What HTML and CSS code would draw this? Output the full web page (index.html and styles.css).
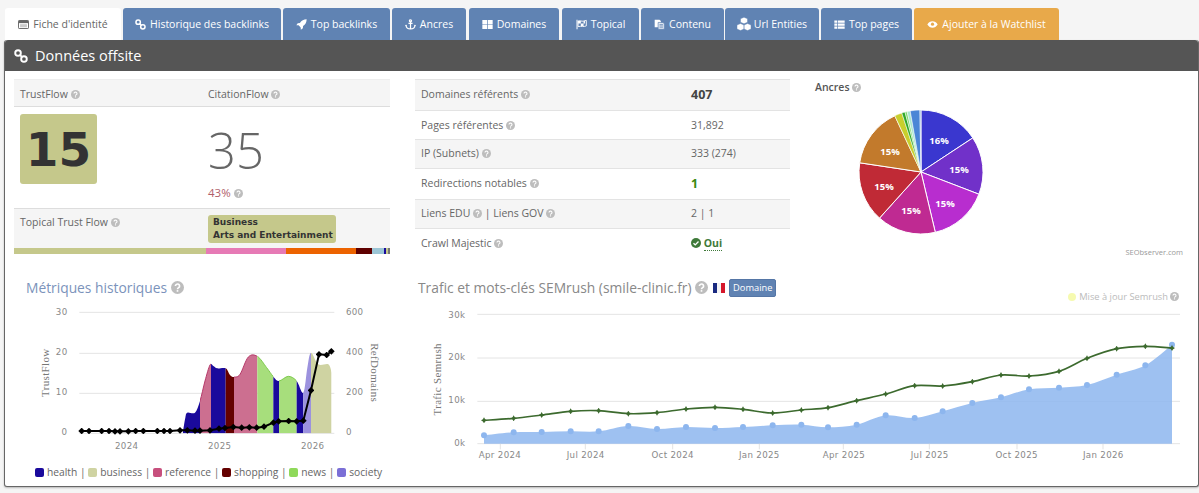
FILE: index.html
```html
<!DOCTYPE html>
<html lang="fr">
<head>
<meta charset="utf-8">
<title>Données offsite</title>
<link rel="stylesheet" href="styles.css">
</head>
<body>
<svg class="defs" width="0" height="0" aria-hidden="true">
  <symbol id="i-q" viewBox="0 0 16 16"><circle cx="8" cy="8" r="8" fill="#bdbdbd"/><path d="M5.4 6.2a2.6 2.4 0 1 1 4 2c-.9.6-1.4 1-1.4 2" fill="none" stroke="#fff" stroke-width="2"/><rect x="7" y="11.2" width="2" height="2" fill="#fff"/></symbol>
  <symbol id="i-card" viewBox="0 0 16 16"><rect x=".7" y="2.2" width="14.6" height="11.6" rx="1" fill="none" stroke="currentColor" stroke-width="1.4"/><rect x="1" y="2.5" width="14" height="3.5" fill="currentColor"/><rect x="3" y="7.5" width="10" height="4.5" fill="currentColor" opacity=".35"/></symbol>
  <symbol id="i-link" viewBox="0 0 16 16"><g fill="none" stroke="currentColor" stroke-width="2.200"><circle cx="4.600" cy="4.600" r="3.200"/><circle cx="11.400" cy="11.400" r="3.200"/><path d="M6.500 6.500l3 3"/></g></symbol>
  <symbol id="i-rocket" viewBox="0 0 16 16"><path d="M15.500.5c-4.300 0-7.500 1.800-9.800 5.200L2.500 6 .5 9l3.300.2 3 3 .2 3.300 3-2 .3-3.200c3.400-2.300 5.200-5.500 5.200-9.800z" fill="currentColor"/></symbol>
  <symbol id="i-anchor" viewBox="0 0 16 16"><g fill="none" stroke="currentColor" stroke-width="1.800"><circle cx="8" cy="2.600" r="1.500"/><path d="M8 4v10.500M5 6.500h6M1.500 9.500c.3 3.200 3 5 6.500 5s6.200-1.800 6.500-5"/></g><path d="M0 10l1.500-2L3 10zM13 10l1.500-2 1.500 2z" fill="currentColor"/></symbol>
  <symbol id="i-grid" viewBox="0 0 16 16"><path d="M.5 1.500h7v6h-7zM8.500 1.500h7v6h-7zM.5 8.500h7v6h-7zM8.500 8.500h7v6h-7z" fill="currentColor"/></symbol>
  <symbol id="i-flag" viewBox="0 0 16 16"><path d="M1.500 1v14" stroke="currentColor" stroke-width="1.500"/><path d="M3 3c3-1.500 5 1 8 0l4-1v8c-4 2-7 0-12 1z" fill="none" stroke="currentColor" stroke-width="1.300"/><path d="M3 3h4v3.500h4V3h2v3.500h-2v3.500H7V6.500H3z" fill="currentColor"/></symbol>
  <symbol id="i-copy" viewBox="0 0 16 16"><path d="M1 1h7l2 2v9H1z" fill="currentColor"/><path d="M6 5h7l2 2v8H6z" fill="#dfe7f2" stroke="#6083b3"/><path d="M8 8h5M8 10h5M8 12h5" stroke="#6083b3"/></symbol>
  <symbol id="i-cubes" viewBox="0 0 16 16"><path d="M8 .3l4 1.600v4.200L8 7.700 4 6.100V1.900zM4 7.500L8 9.100v4.700L4 15.500 0 13.800V9.100zM12 7.500L16 9.100v4.700L12 15.500 8 13.800V9.100z" fill="currentColor" stroke="#6083b3" stroke-width=".5"/></symbol>
  <symbol id="i-rows" viewBox="0 0 16 16"><path d="M.5 2h4v3.300h-4zM5.500 2h10v3.300h-10zM.5 6.400h4v3.300h-4zM5.500 6.400h10v3.300h-10zM.5 10.800h4v3.300h-4zM5.500 10.800h10v3.300h-10z" fill="currentColor"/></symbol>
  <symbol id="i-eye" viewBox="0 0 16 16"><path d="M.5 8C2.300 5 5 3.300 8 3.300S13.700 5 15.500 8c-1.800 3-4.500 4.700-7.500 4.700S2.300 11 .5 8z" fill="currentColor"/><circle cx="8" cy="7.500" r="2.300" fill="#e8a94a"/></symbol>
  <symbol id="i-check" viewBox="0 0 16 16"><circle cx="8" cy="8" r="8" fill="#3f7a3a"/><path d="M4 8.300l2.800 2.700L12 5.600" fill="none" stroke="#fff" stroke-width="2.200"/></symbol>
</svg>

<nav class="tabs">
  <a class="tab tab-active"><svg class="ico"><use href="#i-card"/></svg>Fiche d'identité</a>
  <a class="tab tab-w158"><svg class="ico"><use href="#i-link"/></svg>Historique des backlinks</a>
  <a class="tab tab-w107"><svg class="ico"><use href="#i-rocket"/></svg>Top backlinks</a>
  <a class="tab tab-w74"><svg class="ico"><use href="#i-anchor"/></svg>Ancres</a>
  <a class="tab tab-w90"><svg class="ico"><use href="#i-grid"/></svg>Domaines</a>
  <a class="tab tab-w77"><svg class="ico"><use href="#i-flag"/></svg>Topical</a>
  <a class="tab tab-w83"><svg class="ico"><use href="#i-copy"/></svg>Contenu</a>
  <a class="tab tab-w94"><svg class="ico ico-wide"><use href="#i-cubes"/></svg>Url Entities</a>
  <a class="tab tab-w91"><svg class="ico"><use href="#i-rows"/></svg>Top pages</a>
  <a class="tab tab-watch"><svg class="ico"><use href="#i-eye"/></svg>Ajouter à la Watchlist</a>
</nav>

<main class="panel">
  <header class="panel-head"><svg class="ico-head"><use href="#i-link"/></svg>Données offsite</header>

  <section class="top-row">
    <div class="flow">
      <div class="flow-head">
        <div>TrustFlow <svg class="q"><use href="#i-q"/></svg></div>
        <div>CitationFlow <svg class="q"><use href="#i-q"/></svg></div>
      </div>
      <div class="flow-body">
        <div class="cell-badge"><div class="tf-badge">15</div></div>
        <div class="cell-cf">
          <div class="cf-num">35</div>
          <div class="cf-pct">43% <svg class="q"><use href="#i-q"/></svg></div>
        </div>
      </div>
      <div class="flow-topical">
        <div>Topical Trust Flow <svg class="q"><use href="#i-q"/></svg></div>
        <div class="cell-topics"><div class="topics">Business<br>Arts and Entertainment</div></div>
      </div>
      <div class="topic-bar">
        <i class="s1"></i><i class="s2"></i><i class="s3"></i><i class="s4"></i><i class="s5"></i><i class="s6"></i><i class="s7"></i><i class="s8"></i>
      </div>
    </div>

    <div class="stats">
      <div class="stat stat-a"><span>Domaines référents <svg class="q"><use href="#i-q"/></svg></span><b class="big">407</b></div>
      <div class="stat stat-b"><span>Pages référentes <svg class="q"><use href="#i-q"/></svg></span><span>31,892</span></div>
      <div class="stat stat-c"><span>IP (Subnets) <svg class="q"><use href="#i-q"/></svg></span><span>333 (274)</span></div>
      <div class="stat stat-d"><span>Redirections notables <svg class="q"><use href="#i-q"/></svg></span><b class="green-num">1</b></div>
      <div class="stat stat-e"><span>Liens EDU <svg class="q"><use href="#i-q"/></svg> | Liens GOV <svg class="q"><use href="#i-q"/></svg></span><span>2 | 1</span></div>
      <div class="stat stat-f"><span>Crawl Majestic <svg class="q"><use href="#i-q"/></svg></span><span class="oui"><svg class="q q-check"><use href="#i-check"/></svg> <b>Oui</b></span></div>
    </div>

    <div class="anchors">
      <div class="anchors-title">Ancres <svg class="q"><use href="#i-q"/></svg></div>
      <svg class="pie" viewBox="790 90 409 160" width="409" height="160">
        <g transform="translate(921 172)" stroke="#fff" stroke-width="1">
          <path fill="#3a37cf" d="M0 0V-62A62 62 0 0 1 51.800-34.100Z"/>
          <path fill="#7131c9" d="M0 0L51.800-34.100A62 62 0 0 1 57.900 22.200Z"/>
          <path fill="#b82dcf" d="M0 0L57.900 22.200A62 62 0 0 1 14.300 60.300Z"/>
          <path fill="#bf2a92" d="M0 0L14.300 60.300A62 62 0 0 1-41.500 46.100Z"/>
          <path fill="#c02a36" d="M0 0L-41.500 46.100A62 62 0 0 1-61.300-9.200Z"/>
          <path fill="#c27a2c" d="M0 0L-61.300-9.200A62 62 0 0 1-26.200-56.200Z"/>
          <path fill="#c8cf2d" stroke-width=".5" d="M0 0L-26.200-56.200A62 62 0 0 1-19.200-59Z"/>
          <path fill="#2fa82a" stroke-width=".5" d="M0 0L-19.200-59A62 62 0 0 1-16-59.900Z"/>
          <path fill="#7ed86c" stroke-width=".5" d="M0 0L-16-59.900A62 62 0 0 1-13.900-60.400Z"/>
          <path fill="#a8e6cf" stroke-width=".5" d="M0 0L-13.900-60.400A62 62 0 0 1-10.800-61.100Z"/>
          <path fill="#4a86d6" stroke-width=".5" d="M0 0L-10.800-61.100A62 62 0 0 1-1.100-62Z"/>
          <path fill="#9db9e0" stroke-width=".5" d="M0 0L-1.100-62A62 62 0 0 1 0-62Z"/>
        </g>
        <g class="pie-labels">
          <text x="939" y="144">16%</text>
          <text x="959" y="173">15%</text>
          <text x="945" y="207">15%</text>
          <text x="911" y="214">15%</text>
          <text x="884" y="190">15%</text>
          <text x="890" y="155">15%</text>
        </g>
      </svg>
      <div class="credit">SEObserver.com</div>
    </div>
  </section>

  <section class="bottom-row">
    <div class="hist">
      <h2 class="title-blue">Métriques historiques <svg class="q-lg"><use href="#i-q"/></svg></h2>
      <svg class="hist-chart" viewBox="42 90 1158 450" width="386" height="150">
        <defs>
          <clipPath id="hist-area"><path class="js-area"/></clipPath>
          <clipPath id="top-ref"><rect x="600" y="200" width="33" height="300"/><rect x="702" y="200" width="70" height="300"/></clipPath>
          <clipPath id="top-news"><rect x="772" y="200" width="48" height="300"/><rect x="837" y="200" width="53" height="300"/></clipPath>
          <marker id="dia-k" viewBox="-8 -8 16 16" markerUnits="userSpaceOnUse" markerWidth="20" markerHeight="20"><path d="M0-8L8 0 0 8-8 0Z" fill="#000"/></marker>
        </defs>
        <g class="grid"><path d="M238 124H1003M238 247H1003M238 367H1003M238 487H1003"/></g>
        <g clip-path="url(#hist-area)">
          <rect x="548" y="200" width="52" height="300" fill="#1a0a9c"/>
          <rect x="600" y="200" width="33" height="300" fill="#cc6f90"/>
          <rect x="633" y="200" width="44" height="300" fill="#1a0a9c"/>
          <rect x="677" y="200" width="25" height="300" fill="#640000"/>
          <rect x="702" y="200" width="70" height="300" fill="#cc6f90"/>
          <rect x="772" y="200" width="48" height="300" fill="#a7de7c"/>
          <rect x="820" y="200" width="17" height="300" fill="#1a0a9c"/>
          <rect x="837" y="200" width="53" height="300" fill="#a7de7c"/>
          <rect x="890" y="200" width="20" height="300" fill="#1a0a9c"/>
          <rect x="910" y="200" width="23" height="300" fill="#9c92de"/>
          <rect x="933" y="200" width="62" height="300" fill="#cfd3a2"/>
        </g>
        <path class="js-top top-line top-ref" clip-path="url(#top-ref)"/>
        <path class="js-top top-line top-news" clip-path="url(#top-news)"/>
        <polyline class="black-line" points="245,480 267,480 305,480 327,480 345,481 360,481 385,481 407,480 430,480 472,480 492,480 510,480 540,478 562,478 585,479 600,479 630,478 657,473 675,471 700,468 725,470 748,469 770,470 792,467 820,455 836,451 866,450 890,451 910,449 933,358 957,250 980,252 994,241"/>
        <g class="tick">
          <text x="185" y="133" text-anchor="middle">30</text>
          <text x="185" y="253" text-anchor="middle">20</text>
          <text x="185" y="373" text-anchor="middle">10</text>
          <text x="193" y="493" text-anchor="middle">0</text>
          <text x="1064" y="132" text-anchor="middle">600</text>
          <text x="1064" y="253" text-anchor="middle">400</text>
          <text x="1064" y="373" text-anchor="middle">200</text>
          <text x="1047" y="493" text-anchor="middle">0</text>
          <text x="380" y="533" text-anchor="middle">2024</text>
          <text x="659" y="533" text-anchor="middle">2025</text>
          <text x="938" y="533" text-anchor="middle">2026</text>
        </g>
        <text class="axis-title" transform="translate(146 305) rotate(-90)" text-anchor="middle">TrustFlow</text>
        <text class="axis-title" transform="translate(1112 305) rotate(90)" text-anchor="middle">RefDomains</text>
      </svg>
      <div class="legend">
        <i class="lg l-health"></i>health | <i class="lg l-business"></i>business | <i class="lg l-reference"></i>reference | <i class="lg l-shopping"></i>shopping | <i class="lg l-news"></i>news | <i class="lg l-society"></i>society
      </div>
    </div>

    <div class="sem">
      <div class="sem-head">
        <h2 class="title-gray">Trafic et mots-clés SEMrush (smile-clinic.fr) <svg class="q-lg"><use href="#i-q"/></svg></h2>
        <svg class="flag" viewBox="0 0 12 10" width="12" height="10"><rect width="4" height="10" fill="#1a2a80"/><rect x="4" width="4" height="10" fill="#f4f4f4"/><rect x="8" width="4" height="10" fill="#d5172b"/></svg>
        <span class="chip">Domaine</span>
        <span class="update"><i class="dot"></i>Mise à jour Semrush <svg class="q"><use href="#i-q"/></svg></span>
      </div>
      <svg class="sem-chart" viewBox="0 90 2385 510" width="795" height="170">
        <defs>
          <marker id="dot-b" viewBox="-10 -10 20 20" markerUnits="userSpaceOnUse" markerWidth="20" markerHeight="20"><circle r="9" fill="#8db6ee"/></marker>
          <marker id="dia-g" viewBox="-8 -8 16 16" markerUnits="userSpaceOnUse" markerWidth="18" markerHeight="18"><path d="M0-8L3-3 8 0 3 3 0 8-3 3-8 0-3-3Z" fill="#3c6a2e"/></marker>
        </defs>
        <g class="grid"><path d="M232 130H2340M232 261H2340M232 391H2340M232 518H2340"/></g>
        <path class="js-blue-area blue-area"/>
        <path class="js-blue blue-line"/>
        <path class="js-green green-line"/>
        <g class="x-ticks"><path d="M301 518v17M556 518v17M818 518v17M1078 518v17M1330 518v17M1588 518v17M1851 518v17M2109 518v17"/></g>
        <g class="tick">
          <text x="196" y="140" text-anchor="end">30k</text>
          <text x="196" y="268" text-anchor="end">20k</text>
          <text x="196" y="396" text-anchor="end">10k</text>
          <text x="196" y="524" text-anchor="end">0k</text>
          <text x="300" y="562" text-anchor="middle">Apr 2024</text>
          <text x="557" y="562" text-anchor="middle">Jul 2024</text>
          <text x="818" y="562" text-anchor="middle">Oct 2024</text>
          <text x="1078" y="562" text-anchor="middle">Jan 2025</text>
          <text x="1332" y="562" text-anchor="middle">Apr 2025</text>
          <text x="1589" y="562" text-anchor="middle">Jul 2025</text>
          <text x="1850" y="562" text-anchor="middle">Oct 2025</text>
          <text x="2110" y="562" text-anchor="middle">Jan 2026</text>
        </g>
        <text class="axis-title" transform="translate(124 325) rotate(-90)" text-anchor="middle">Trafic Semrush</text>
      </svg>
    </div>
  </section>
</main>
<script src="chart.js"></script>
</body>
</html>
```

FILE: styles.css
```css
* { box-sizing: border-box; }
html, body { margin: 0; padding: 0; }
body {
  width: 1199px;
  height: 493px;
  overflow: hidden;
  background: #f5f5f5;
  font-family: "Open Sans", "Liberation Sans", sans-serif;
  font-size: 10.5px;
  color: #666;
}
.defs { position: absolute; }

.tabs { display: flex; gap: 2px; padding: 8px 0 0 5px; height: 40px; }
.tab {
  display: flex; align-items: center; justify-content: center;
  height: 32px; border-radius: 3px 3px 0 0;
  background: #6083b3; color: #fff; white-space: nowrap; font-size: 10.5px;
}
.tab-active { width: 116px; background: #fff; color: #666; }
.tab-w158 { width: 158px; }
.tab-w107 { width: 107px; }
.tab-w74 { width: 74px; }
.tab-w90 { width: 90px; margin-left: 1px; }
.tab-w77 { width: 77px; margin-left: 1px; }
.tab-w83 { width: 83px; }
.tab-w94 { width: 94px; margin-left: -1px; }
.tab-w91 { width: 91px; }
.tab-watch { width: 145px; background: #e8a94a; }
.ico { width: 11px; height: 11px; margin-right: 4px; flex: none; }
.ico-wide { width: 14px; height: 14px; margin-right: 3px; }

.panel {
  margin-left: 4px; width: 1195px; height: 447px;
  background: #fff; border: 1px solid #666; border-top: 0;
  border-radius: 3px; box-shadow: 0 1px 2px rgba(0,0,0,.25);
}
.panel-head {
  display: flex; align-items: center;
  height: 31px; background: #555; color: #fff;
  font-size: 14.500px; padding-left: 9px; border-radius: 3px 3px 0 0;
}
.ico-head { width: 14px; height: 14px; margin-right: 7px; color: #fff; }

.q { width: 9px; height: 9px; vertical-align: -1px; }
.q-lg { width: 13px; height: 13px; vertical-align: -1px; }

.top-row { display: flex; padding: 8px 0 0 9px; height: 200px; }

.flow { width: 376px; margin-right: 25px; flex: none; }
.flow-head, .flow-body, .flow-topical { display: grid; grid-template-columns: 188px 188px; }
.flow-head {
  height: 28px; background: #f5f5f5; border-top: 1px solid #eee; border-bottom: 1px solid #ddd;
  align-items: center; padding: 2px 0 0 6px;
}
.flow-body { height: 101px; }
.cell-badge { padding: 7px 0 0 6px; }
.tf-badge {
  width: 77px; height: 70px; border-radius: 3px; background: #c5c88b; color: #333;
  font-family: "DejaVu Sans", sans-serif; font-weight: 700; font-size: 47px;
  display: flex; align-items: center; justify-content: center;
}
.cell-cf { padding-left: 6px; }
.cf-num { font-size: 49px; font-weight: 300; color: #666; line-height: 68px; margin-top: 9px; }
.cf-pct { color: #b0606a; font-size: 11.500px; margin-top: 1px; }
.flow-topical {
  height: 40px; background: #f5f5f5; border-top: 1px solid #ddd; padding: 6px 0 0 6px;
}
.topics {
  width: 128px; height: 28px; border-radius: 3px; background: #c5c88b; color: #333;
  font-family: "DejaVu Sans", sans-serif; font-weight: 700; font-size: 9px; line-height: 13px;
  padding: 1px 0 0 5px; white-space: nowrap;
}
.topic-bar { display: flex; height: 6px; }
.topic-bar i { display: block; height: 6px; }
.s1 { width: 192px; background: #c5c88b; }
.s2 { width: 80px; background: #e67ab5; }
.s3 { width: 70px; background: #ec6300; }
.s4 { width: 16px; background: #5f0000; }
.s5 { width: 12px; background: #9cc5d5; }
.s6 { width: 2px; background: #1a0a9c; }
.s7 { width: 2px; background: #c5c88b; }
.s8 { width: 2px; background: #777; }

.stats { width: 375px; flex: none; }
.stat {
  display: grid; grid-template-columns: 270px 1fr; align-items: center;
  padding: 0 0 2px 6px; border-top: 1px solid #e3e3e3;
}
.stat-a { height: 31px; background: #f5f5f5; }
.stat-b { height: 29px; padding-bottom: 0; }
.stat-c { height: 29px; background: #f5f5f5; }
.stat-d { height: 31px; }
.stat-e { height: 29px; background: #f5f5f5; }
.stat-f { height: 30px; }
.big { font-size: 12.500px; color: #444; }
.green-num { font-size: 12.500px; color: #3a8a12; }
.oui { color: #3f7a3a; }
.oui b { border-bottom: 1px dotted #3f7a3a; }
.q-check { width: 10px; height: 10px; }

.anchors { flex: 1; position: relative; }
.anchors-title { padding: 1px 0 0 25px; font-weight: 600; color: #555; }
.pie { position: absolute; left: 0; top: 11px; }
.pie-labels text { fill: #fff; font-size: 9.500px; font-weight: 700; text-anchor: middle; font-family: "Open Sans", sans-serif; }
.credit { position: absolute; right: 15px; top: 168px; font-size: 7.500px; color: #999; }

.bottom-row { display: flex; padding-left: 9px; }
.hist { width: 386px; flex: none; }
.sem { width: 795px; flex: none; }
h2 { margin: 0; font-weight: 400; font-size: 13.800px; line-height: 20px; }
.title-blue { padding: 7px 0 0 12px; color: #7b93bb; height: 30px; }
.hist-chart, .sem-chart { display: block; }
.title-gray { color: #888; }
.sem-head { display: flex; align-items: center; height: 30px; padding: 4px 0 0 18px; position: relative; }
.flag { margin-left: 5px; }
.chip {
  margin-left: 4px; padding: 1px 3px; border-radius: 2px; background: #6083b3; border: 1px solid #5576a6;
  color: #fff; font-size: 9.300px; line-height: 14px;
}
.update { position: absolute; right: 16px; top: 19px; color: #bbb; font-size: 9.300px; display: flex; align-items: center; gap: 2px; }
.dot { width: 8px; height: 8px; border-radius: 50%; background: #f6fab0; margin-right: 1px; }

.grid path { stroke: #e4e4e4; stroke-width: 3; fill: none; }
.x-ticks path { stroke: #d5d5d5; stroke-width: 2; fill: none; }
.tick text { font-family: "DejaVu Sans", sans-serif; font-size: 26px; fill: #888; letter-spacing: 1px; }
.axis-title { font-family: "Liberation Serif", serif; font-size: 33px; fill: #777; letter-spacing: 1px; }
.top-line { fill: none; stroke-width: 3; }
.top-ref { stroke: #b53a6a; }
.top-news { stroke: #7dc94e; }
.black-line { fill: none; stroke: #000; stroke-width: 6; marker-start: url(#dia-k); marker-mid: url(#dia-k); marker-end: url(#dia-k); }
.blue-area { fill: #8db6ee; fill-opacity: .85; }
.blue-line { fill: none; stroke: none; marker-start: url(#dot-b); marker-mid: url(#dot-b); marker-end: url(#dot-b); }
.green-line { fill: none; stroke: #3c6a2e; stroke-width: 5; marker-start: url(#dia-g); marker-mid: url(#dia-g); marker-end: url(#dia-g); }

.legend { padding: 14px 0 0 21px; white-space: nowrap; color: #666; font-size: 10.250px; line-height: 14px; }
.lg { display: inline-block; width: 9px; height: 9px; border-radius: 2px; margin-right: 3px; vertical-align: -1px; }
.l-health { background: #1a0a9c; }
.l-business { background: #cfd3a2; }
.l-reference { background: #c74f7d; }
.l-shopping { background: #640000; }
.l-news { background: #8fd95a; }
.l-society { background: #7b6fd6; }
```

FILE: chart.js
```js
function parse(s) {
  return s.trim().split(/\s+/).map(function (p) { return p.split(",").map(Number); });
}
function spline(pts) {
  var d = "";
  for (var i = 0; i < pts.length - 1; i++) {
    var p0 = pts[Math.max(i - 1, 0)], p1 = pts[i], p2 = pts[i + 1], p3 = pts[Math.min(i + 2, pts.length - 1)];
    d += "C" + (p1[0] + (p2[0] - p0[0]) / 6) + " " + (p1[1] + (p2[1] - p0[1]) / 6) + " " +
      (p2[0] - (p3[0] - p1[0]) / 6) + " " + (p2[1] - (p3[1] - p1[1]) / 6) + " " + p2[0] + " " + p2[1];
  }
  return d;
}
function setAll(sel, d) {
  document.querySelectorAll(sel).forEach(function (el) { el.setAttribute("d", d); });
}
var hist = parse("548,487 556,440 562,425 585,425 600,390 615,330 630,282 640,285 652,292 677,292 690,312 702,318 720,310 745,258 772,256 800,290 820,317 837,330 865,316 890,330 910,365 922,290 933,245 955,280 985,280 995,305");
var blue = parse("252,493 341,484 425,483 512,481 596,481 685,465 771,474 858,468 945,471 1029,468 1118,463 1204,461 1284,469 1370,461 1457,433 1544,441 1628,421 1717,396 1803,379 1887,355 1977,350 2061,342 2150,311 2236,283 2316,221");
var green = parse("252,448 341,442 425,432 512,421 596,419 685,428 771,425 858,414 945,409 1029,415 1118,426 1204,417 1284,410 1370,389 1457,369 1544,344 1628,345 1717,332 1803,312 1887,315 1977,301 2061,262 2150,233 2236,226 2316,231");

function start(pts) { return "M" + pts[0][0] + " " + pts[0][1]; }
setAll(".js-top", start(hist) + spline(hist));
setAll(".js-area", "M548 487L" + hist[0][0] + " " + hist[0][1] + spline(hist) + "L995 487Z");
setAll(".js-blue", start(blue) + spline(blue));
setAll(".js-blue-area", "M252 518L252 493" + spline(blue) + "L2316 518Z");
setAll(".js-green", start(green) + spline(green));
```
